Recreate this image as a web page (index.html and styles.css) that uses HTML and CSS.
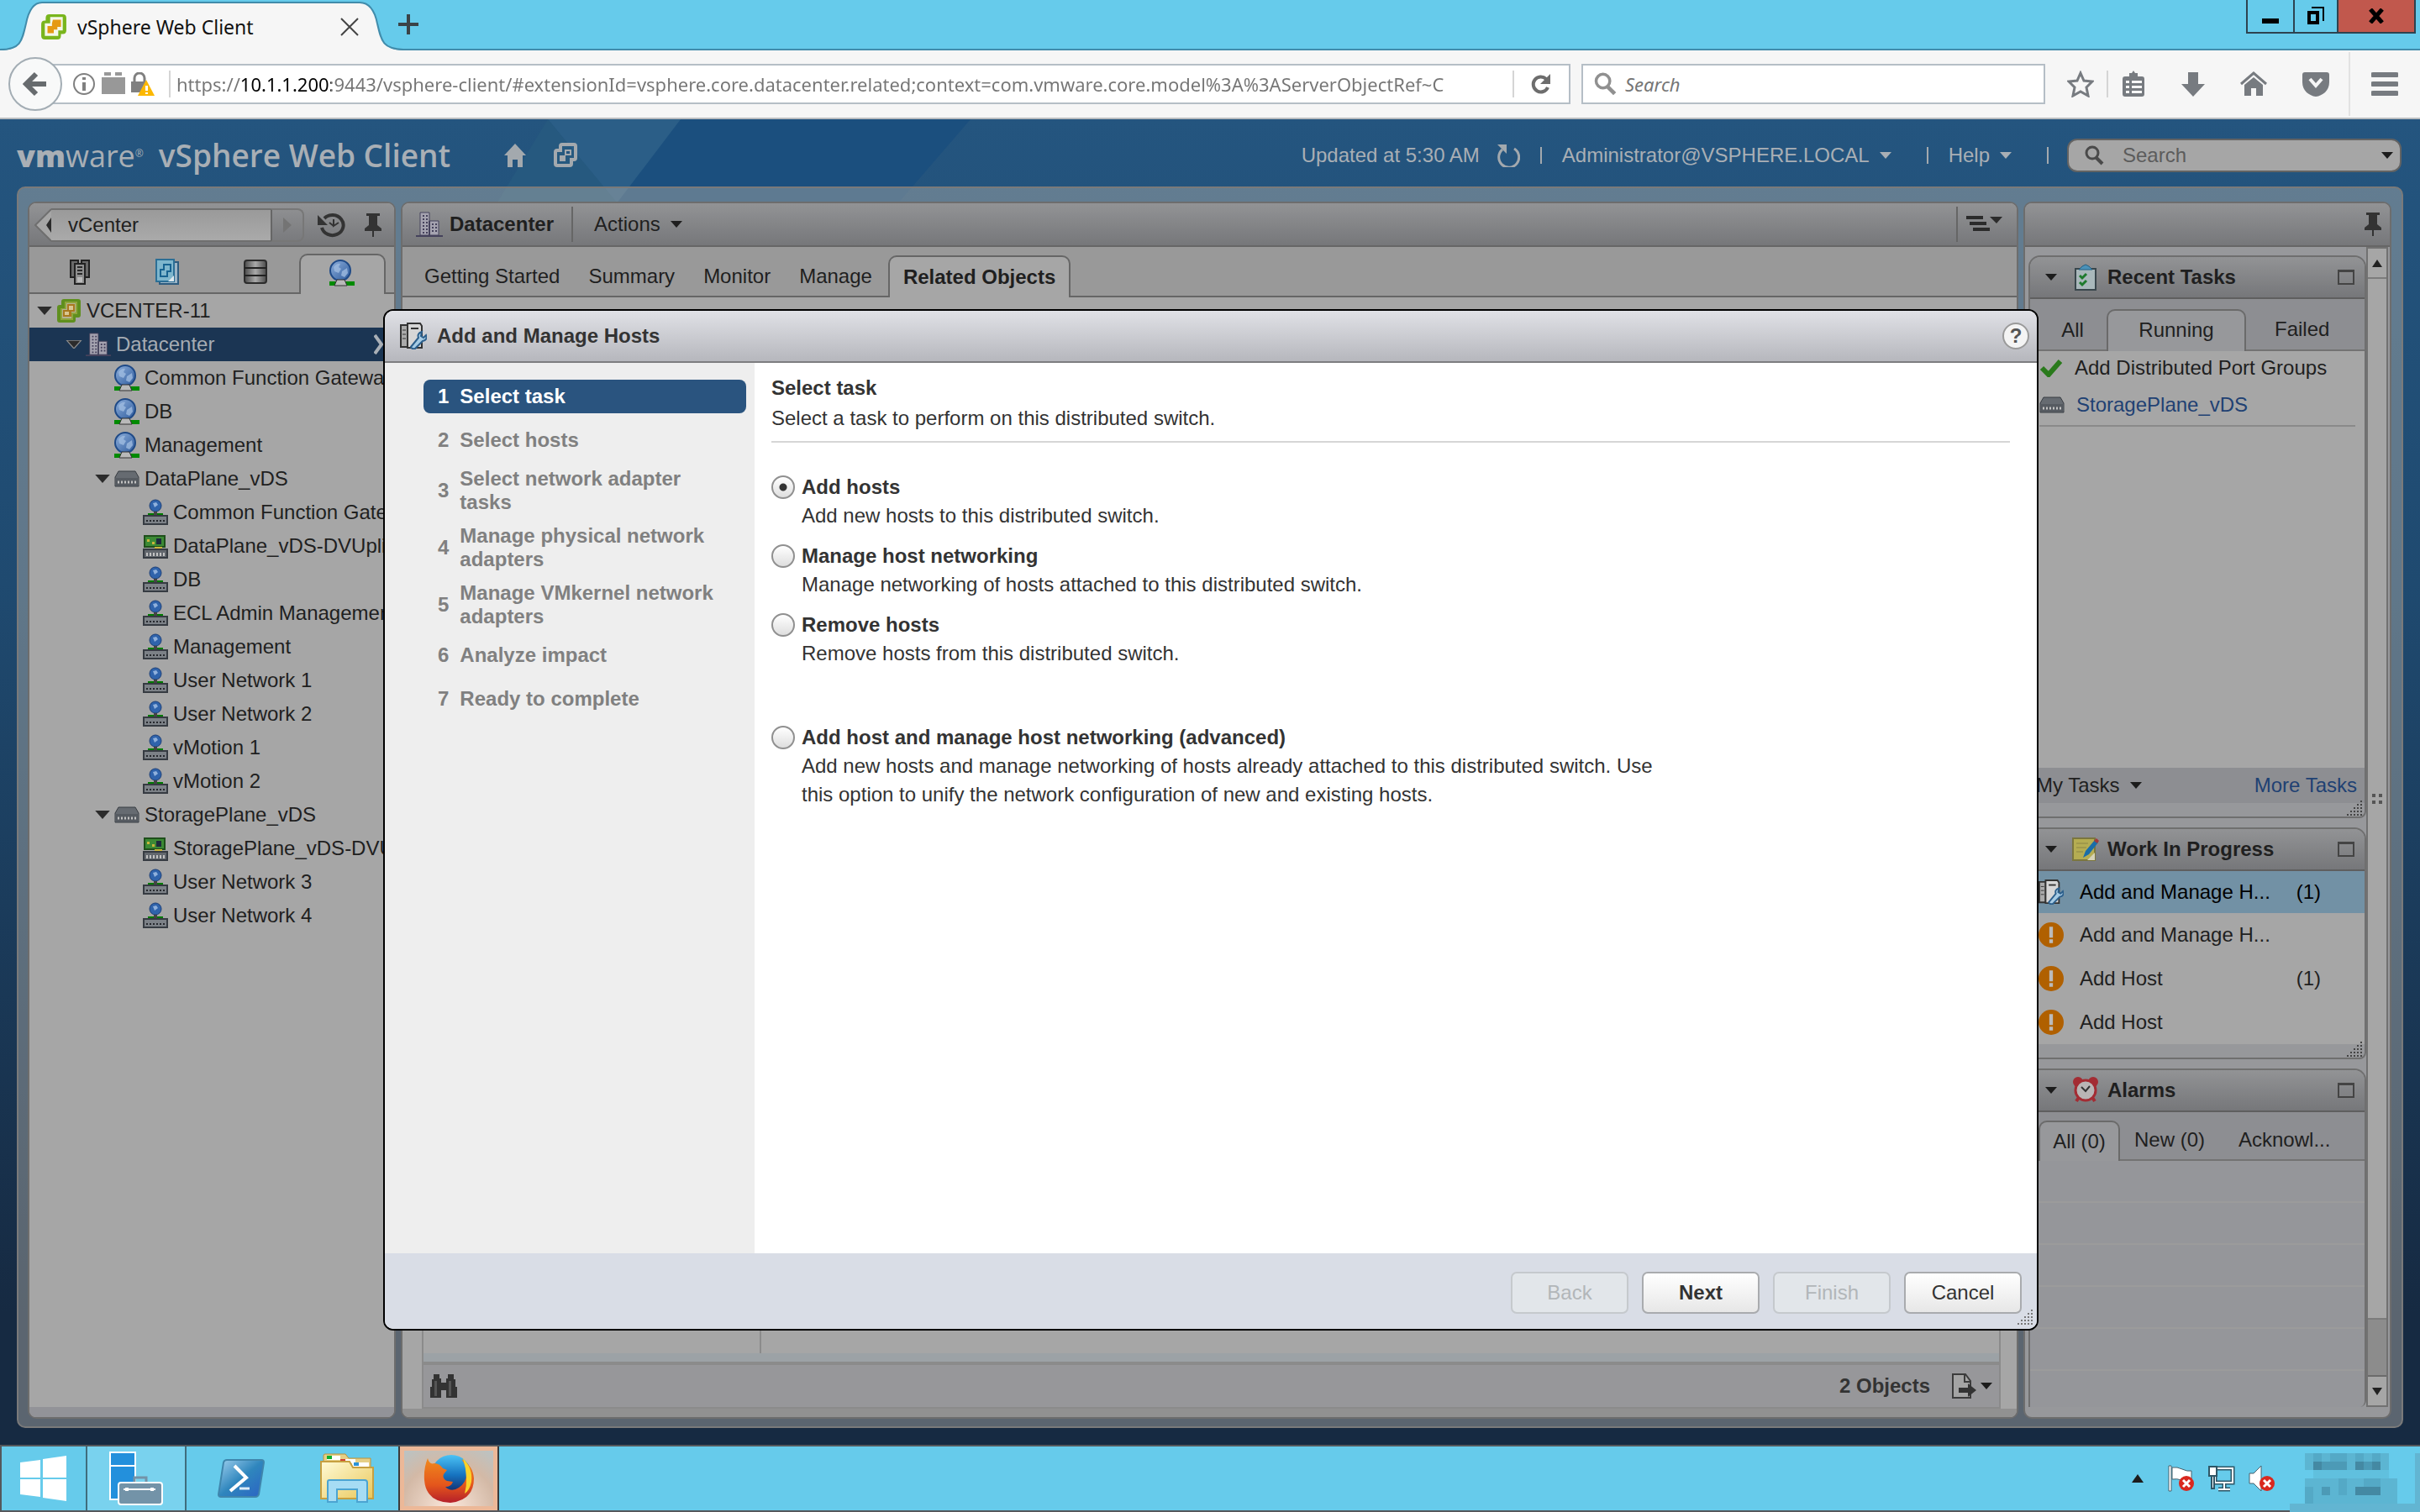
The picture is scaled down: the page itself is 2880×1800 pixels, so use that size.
FILE: index.html
```html
<!DOCTYPE html>
<html lang="en">
<head>
<meta charset="utf-8">
<title>vSphere Web Client</title>
<link rel="stylesheet" href="styles.css">
</head>
<body>
<svg class="defs" aria-hidden="true">
  <defs>
    <linearGradient id="g-globe" x1="0" y1="0" x2="1" y2="1"><stop offset="0" stop-color="#8fb0dc"/><stop offset="1" stop-color="#2d5a9c"/></linearGradient>
    <linearGradient id="g-metal" x1="0" y1="0" x2="1" y2="0"><stop offset="0" stop-color="#4a4a4a"/><stop offset=".5" stop-color="#aaa"/><stop offset="1" stop-color="#4a4a4a"/></linearGradient>
    <linearGradient id="g-ps" x1="0" y1="0" x2="1" y2="1"><stop offset="0" stop-color="#9fd0ee"/><stop offset=".5" stop-color="#2f86bd"/><stop offset="1" stop-color="#2b62c4"/></linearGradient>
    <linearGradient id="g-fold" x1="0" y1="0" x2="1" y2="1"><stop offset="0" stop-color="#fffbd6"/><stop offset="1" stop-color="#e9c75a"/></linearGradient>
    <linearGradient id="g-fox" x1="0" y1="0" x2="0" y2="1"><stop offset="0" stop-color="#f08a1d"/><stop offset=".6" stop-color="#e4561c"/><stop offset="1" stop-color="#b51f2a"/></linearGradient>
    <linearGradient id="g-sea" x1="0" y1="0" x2="0" y2="1"><stop offset="0" stop-color="#4cc3f5"/><stop offset=".5" stop-color="#1673c0"/><stop offset="1" stop-color="#141f5c"/></linearGradient>
  </defs>
  <symbol id="i-vc" viewBox="0 0 30 30">
    <path d="M9 1h17q3 0 3 3v16q0 3-3 3h-3v3q0 3-3 3H4q-3 0-3-3V11q0-3 3-3h2V4q0-3 3-3z" fill="#5f8f1e"/>
    <path d="M10 4h15v15h-5v7H5V12h5z" fill="#8fa53c"/>
    <path d="M12 6h11v11h-5v7H7V13h5z" fill="#b5b294"/>
    <path d="M13 7h9v9h-4v6H8v-8h5z" fill="#a9791d"/><path d="M15 9h5v5h-5zM10 16h5v4h-5z" fill="#d9c691"/>
  </symbol>
  <symbol id="i-vcbright" viewBox="0 0 30 30">
    <path d="M10 1h15q4 0 4 4v14q0 4-4 4h-2v2q0 4-4 4H5q-4 0-4-4V12q0-4 4-4h1V5q0-4 4-4z" fill="#79b51c"/>
    <path d="M11 4h14v15h-5v6H5V11h6z" fill="#f4f7ea"/>
    <path d="M14 7h9v8h-4v3h-4v4H8v-8h5v-3z" fill="#e59a12"/>
  </symbol>
  <symbol id="i-dc" viewBox="0 0 32 30">
    <path d="M5 1h11v10h11v17H5z" fill="#a5a3b0" stroke="#45425c" stroke-width="1"/><path d="M16 11v17M0 29h32" stroke="#45425c" stroke-width="2"/>
    <path d="M8 5h6M8 9h6M8 13h6M8 17h6M8 21h6M8 25h6M19 15h6M19 19h6M19 23h6" stroke="#45425c" stroke-width="2" stroke-dasharray="2 2"/>
  </symbol>
  <symbol id="i-globe" viewBox="0 0 30 32">
    <circle cx="13" cy="13" r="12" fill="url(#g-globe)" stroke="#1f4a87" stroke-width="2"/>
    <path d="M5 9q4-5 8-4l-2 4 3 2-3 5-5-2zM15 14l6-4 1 6-4 5-4-2z" fill="#9fbbe0" opacity=".8"/>
    <path d="M0 26h30v5H0z" fill="#008a00"/><path d="M9 24h9l3 7H6z" fill="#b9b9b9" stroke="#333" stroke-width="1"/>
  </symbol>
  <symbol id="i-switch" viewBox="0 0 30 20">
    <path d="M5 1h20l4 7v11H1V8z" fill="#666b71" stroke="#373c42" stroke-width="1"/><path d="M1 9h28v9H1z" fill="#565b61"/>
    <path d="M4 14h22" stroke="#c2c2c2" stroke-width="3" stroke-dasharray="2 2"/>
  </symbol>
  <symbol id="i-pg" viewBox="0 0 30 32">
    <circle cx="15" cy="8" r="7" fill="#2f63ab" stroke="#1c3f78"/><path d="M12 5l4-1 2 3-4 3z" fill="#8fb0dc"/>
    <path d="M6 18h18" stroke="#007a00" stroke-width="2"/><path d="M13 15h4v4h-4z" fill="#444"/>
    <path d="M1 20h28v10H1z" fill="#7c8187" stroke="#363b42" stroke-width="2"/><path d="M4 26h22" stroke="#26292e" stroke-width="2" stroke-dasharray="2 2"/>
  </symbol>
  <symbol id="i-uplink" viewBox="0 0 30 32">
    <path d="M2 4h24v13H2z" fill="#3c8a35" stroke="#1f4f1b" stroke-width="2"/><path d="M16 7h6v7h-6z" fill="#1e2b3c"/><path d="M5 8h3v3H5zM11 11h3v3h-3zM14 17h9v2h-9z" fill="#c9b53c"/>
    <path d="M1 20h28v10H1z" fill="#62676d" stroke="#363b42" stroke-width="2"/><path d="M4 26h22" stroke="#c2c2c2" stroke-width="4" stroke-dasharray="2 2"/>
  </symbol>
  <symbol id="i-hosts" viewBox="0 0 28 32">
    <path d="M3 2h9v20H3zM16 2h9v20h-9z" fill="#6a6a6a" stroke="#222" stroke-width="2"/><path d="M8 6h12v24H8z" fill="#8f8f8f" stroke="#222" stroke-width="2"/><path d="M11 10h6M11 14h6M11 18h6" stroke="#2b2b2b" stroke-width="2"/><path d="M11 22h6v6h-6z" fill="#bbb"/>
  </symbol>
  <symbol id="i-vms" viewBox="0 0 30 32">
    <path d="M6 4h22v26H6z" fill="#9db5c6" stroke="#2d5c80" stroke-width="2"/><path d="M2 1h21v26H2z" fill="#7eb6cd" stroke="#2c6f96" stroke-width="2"/><path d="M11 7h8v8h-4v6H7v-8h4z" fill="none" stroke="#176391" stroke-width="2"/><path d="M23 20v7h-7z" fill="#dde8ee"/>
  </symbol>
  <symbol id="i-store" viewBox="0 0 28 30">
    <rect x="1" y="1" width="26" height="27" rx="3" fill="url(#g-metal)" stroke="#2c2c2c" stroke-width="2"/><path d="M1 10h26M1 19h26" stroke="#222" stroke-width="2"/>
  </symbol>
  <symbol id="i-pin" viewBox="0 0 24 30"><path d="M4 1h16v3h-3v11l5 4v3H2v-3l5-4V4H4zM11 22h2v7h-2z" fill="currentColor"/></symbol>
  <symbol id="i-hist" viewBox="0 0 34 32"><path d="M8 8a13 12 0 1 1-3 11" fill="none" stroke="currentColor" stroke-width="4"/><path d="M0 4v12h12z" fill="currentColor"/><path d="M19 9v8l6-4M19 17l-5-4" fill="none" stroke="currentColor" stroke-width="2"/></symbol>
  <symbol id="i-wiz" viewBox="0 0 32 32">
    <path d="M1 3h8v26H1z" fill="#aaa" stroke="#333" stroke-width="2"/><path d="M3 9h4M3 14h4M3 19h4" stroke="#333"/>
    <path d="M9 1h15l2 3v26H9z" fill="#d6d6d6" stroke="#333" stroke-width="2"/><path d="M13 7h9" stroke="#333" stroke-width="2"/>
    <path d="M13 29l9-11q-2-5 4-7l-1 5 3 2 3-3q2 6-4 7l-9 9q-4 1-5-2z" fill="#a6cbe4" stroke="#2c5f8c" stroke-width="2"/>
  </symbol>
  <symbol id="i-caret" viewBox="0 0 14 8"><path d="M0 0h14L7 8z" fill="currentColor"/></symbol>
  <symbol id="i-mag" viewBox="0 0 24 24"><circle cx="10" cy="9" r="7" fill="none" stroke="currentColor" stroke-width="3"/><path d="M14 14l8 8" stroke="currentColor" stroke-width="4"/></symbol>
  <symbol id="i-warn" viewBox="0 0 28 28"><circle cx="14" cy="14" r="14" fill="#b06000"/><path d="M12 5h4v12h-4zM12 19h4v4h-4z" fill="#bbb"/></symbol>
  <symbol id="i-grip" viewBox="0 0 20 20"><path d="M17 1h2v2h-2zM13 5h2v2h-2zM17 5h2v2h-2zM9 9h2v2H9zM13 9h2v2h-2zM17 9h2v2h-2zM5 13h2v2H5zM9 13h2v2H9zM13 13h2v2h-2zM17 13h2v2h-2zM1 17h2v2H1zM5 17h2v2H5zM9 17h2v2H9zM13 17h2v2h-2zM17 17h2v2h-2z" fill="currentColor"/></symbol>
</svg>

<header class="titlebar">
  <div class="tab">
    <svg class="tab-shape" viewBox="0 0 480 60" aria-hidden="true"><path d="M0 60C24 60 26 50 31 28Q36 3 50 3H428Q444 3 449 28C454 50 456 59 480 60z" fill="#f6f6f6"/><path d="M0 59C24 59 26 50 31 28Q36 3 50 3H428Q444 3 449 28C454 50 456 58 480 59" fill="none" stroke="#418cab" stroke-width="2"/></svg>
    <svg class="ic32"><use href="#i-vcbright"/></svg>
    <span class="tab-title">vSphere Web Client</span>
    <button class="plain" aria-label="Close tab"><svg width="22" height="22" viewBox="0 0 22 22"><path d="M1 1l20 20M21 1L1 21" stroke="#444" stroke-width="2"/></svg></button>
  </div>
  <button class="plain" aria-label="New tab"><svg width="26" height="26" viewBox="0 0 26 26"><path d="M13 1v24M1 13h24" stroke="#3b4347" stroke-width="4"/></svg></button>
  <div class="winbtns">
    <button class="wb wb-min" aria-label="Minimize"><svg width="20" height="30" viewBox="0 0 20 30"><path d="M0 18h20v6H0z"/></svg></button>
    <button class="wb wb-max" aria-label="Restore"><svg width="22" height="24" viewBox="0 0 22 24"><path d="M6 2h14v16" fill="none" stroke="#000" stroke-width="2"/><path d="M3 8h10v12H3z" fill="none" stroke="#000" stroke-width="4"/></svg></button>
    <button class="wb wb-close" aria-label="Close"><svg width="20" height="18" viewBox="0 0 20 18"><path d="M3 1l14 16M17 1L3 17" stroke="#000" stroke-width="5"/></svg></button>
  </div>
</header>

<nav class="toolbar" aria-label="Browser">
  <button class="back" aria-label="Back"><svg width="30" height="30" viewBox="0 0 30 30"><path d="M16 3L4 15l12 12M5 15h23" fill="none" stroke="#676b6e" stroke-width="6"/></svg></button>
  <div class="urlbox">
    <svg width="28" height="28" viewBox="0 0 28 28"><circle cx="14" cy="14" r="12" fill="none" stroke="#808080" stroke-width="2"/><path d="M12 6h4v3h-4zM12 12h4v10h-4z" fill="#808080"/></svg>
    <svg width="28" height="28" viewBox="0 0 28 28"><path d="M0 6h28v20H0zM3 0h8v4H3zM16 0h8v4h-8z" fill="#989898"/></svg>
    <svg width="28" height="28" viewBox="0 0 28 28"><path d="M4 12V7a6 6 0 0 1 12 0v5" fill="none" stroke="#808080" stroke-width="3"/><path d="M0 11h18v13H0z" fill="#808080"/><path d="M18 9l10 19H8z" fill="#fcb800"/><path d="M17 16h3v6h-3zM17 24h3v2h-3z" fill="#fff"/></svg>
    <span class="vline"></span>
    <input class="url" type="text" aria-label="Address" value="https://10.1.1.200:9443/vsphere-client/#extensionId=vsphere.core.datacenter.related;context=com.vmware.core.model%3A%3AServerObjectRef~C">
    <span class="vline vline-end"></span>
    <button class="plain reload" aria-label="Reload"><svg width="26" height="26" viewBox="0 0 26 26"><path d="M21 17a9 9 0 1 1-2-10" fill="none" stroke="#6d6d6d" stroke-width="4"/><path d="M24 1v12H12z" fill="#6d6d6d"/></svg></button>
  </div>
  <div class="searchbox">
    <svg width="28" height="28" viewBox="0 0 24 24" color="#909090"><use href="#i-mag"/></svg>
    <input class="bsearch" type="text" aria-label="Web search" placeholder="Search">
  </div>
  <div class="tools">
    <svg width="32" height="32" viewBox="0 0 32 32"><path d="M16 3l4 9 10 1-7 7 2 10-9-5-9 5 2-10-7-7 10-1z" fill="none" stroke="#777b80" stroke-width="3"/></svg>
    <span class="vline"></span>
    <svg width="30" height="32" viewBox="0 0 30 32"><path d="M5 7h20q3 0 3 3v18q0 3-3 3H5q-3 0-3-3V10q0-3 3-3zM10 3h3l2-3 2 3h3v5H10z" fill="#777b80"/><path d="M6 12h4v3H6zM13 12h12v3H13zM6 18h4v3H6zM13 18h12v3H13zM6 24h4v3H6zM13 24h12v3H13z" fill="#f6f6f6"/></svg>
    <svg class="t-gap" width="28" height="30" viewBox="0 0 28 30"><path d="M8 1h12v14h8L14 30 0 15h8z" fill="#777b80"/></svg>
    <svg class="t-gap" width="32" height="30" viewBox="0 0 32 30"><path d="M1 15L16 2l15 13" fill="none" stroke="#777b80" stroke-width="3"/><path d="M5 16L16 7l11 9v13h-8v-9h-6v9H5z" fill="#777b80"/></svg>
    <svg class="t-gap" width="32" height="30" viewBox="0 0 32 30"><path d="M3 1h26q3 0 3 3v9c0 10-8 16-16 17C8 29 0 23 0 13V4q0-3 3-3z" fill="#777b80"/><path d="M9 9l7 8 7-8" fill="none" stroke="#f6f6f6" stroke-width="4"/></svg>
    <span class="vline vline-tall"></span>
    <svg width="32" height="28" viewBox="0 0 32 28"><path d="M2 3h28M2 14h28M2 25h28" stroke="#777b80" stroke-width="6" stroke-linecap="round"/></svg>
  </div>
</nav>

<main class="app">
  <svg class="facets" viewBox="0 0 1400 110" aria-hidden="true"><path d="M810 0H1155L1060 110H680z" fill="#1b4f7e"/><path d="M652 0H810L734 100z" fill="#2b5e87"/><path d="M652 0L735 100 725 110H585z" fill="#26597f"/></svg>
  <div class="apphead">
    <div class="logo"><span class="vm">vm</span><span class="ware">ware</span><sup class="reg">®</sup><span class="prod">vSphere Web Client</span></div>
    <svg class="h-home" width="26" height="28" viewBox="0 0 26 28"><path d="M13 0l13 14h-4v14h-6v-9h-6v9H4V14H0z" fill="#a3a9ae"/></svg>
    <svg class="h-vc" width="30" height="30" viewBox="0 0 30 30"><path d="M11 2h14q2 0 2 2v14q0 2-2 2h-3v5q0 2-2 2H5q-2 0-2-2V11q0-2 2-2h4V4q0-2 2-2z" fill="none" stroke="#a3a9ae" stroke-width="4"/><path d="M14 8h8v7h-8zM8 15h7v7H8z" fill="#a3a9ae"/><path d="M16 10h4v3h-4z" fill="#24557f"/></svg>
    <div class="userbar">
      <span>Updated at 5:30 AM</span>
      <button class="plain" aria-label="Refresh"><svg width="28" height="28" viewBox="0 0 28 28"><path d="M21 6a12 12 0 1 1-14 1" fill="none" stroke="#a3a9ae" stroke-width="3"/><path d="M1 1h11v11z" fill="#a3a9ae"/></svg></button>
      <span class="bar"></span>
      <button class="plain menu">Administrator@VSPHERE.LOCAL<svg class="caret"><use href="#i-caret"/></svg></button>
      <span class="bar"></span>
      <button class="plain menu">Help<svg class="caret"><use href="#i-caret"/></svg></button>
      <span class="bar"></span>
    </div>
    <div class="pillsearch">
      <svg width="24" height="24" color="#4a4a4a"><use href="#i-mag"/></svg>
      <input class="vsearch" type="text" aria-label="Search inventory" placeholder="Search">
      <svg class="caret caret-dark"><use href="#i-caret"/></svg>
    </div>
  </div>

  <div class="frame">
    <section class="panel left">
      <div class="phead navhead">
        <svg class="backcap" width="20" height="40" viewBox="0 0 20 40"><path d="M20 1L1 20l19 19" fill="#a6a6a6" stroke="#6f6f6f" stroke-width="2"/><path d="M20 11v18l-6-9z" fill="#2b2b2b"/></svg>
        <button class="crumb">vCenter</button>
        <button class="fwd" aria-label="Forward"><svg width="10" height="18" viewBox="0 0 10 18"><path d="M0 0l10 9-10 9z" fill="#747474"/></svg></button>
        <svg class="nh-hist"><use href="#i-hist"/></svg>
        <svg class="pin"><use href="#i-pin"/></svg>
      </div>
      <div class="icontabs">
        <button class="itab" aria-label="Hosts"><svg class="ic32"><use href="#i-hosts"/></svg></button>
        <button class="itab" aria-label="VMs"><svg class="ic32"><use href="#i-vms"/></svg></button>
        <button class="itab" aria-label="Storage"><svg class="ic28"><use href="#i-store"/></svg></button>
        <button class="itab on" aria-label="Networking"><svg class="ic32"><use href="#i-globe"/></svg></button>
      </div>
      <ul class="tree">
        <li class="l0"><svg class="tw"><use href="#i-caret"/></svg><svg class="ti"><use href="#i-vc"/></svg>VCENTER-11</li>
        <li class="l1 sel"><svg class="tw"><use href="#i-caret"/></svg><svg class="ti"><use href="#i-dc"/></svg><span class="grow">Datacenter</span><svg class="chev" width="12" height="24" viewBox="0 0 12 24"><path d="M1 1l8 11-8 11" fill="none" stroke="#a9afb6" stroke-width="4"/></svg></li>
        <li class="l2"><span class="tw"></span><svg class="ti"><use href="#i-globe"/></svg>Common Function Gateway</li>
        <li class="l2"><span class="tw"></span><svg class="ti"><use href="#i-globe"/></svg>DB</li>
        <li class="l2"><span class="tw"></span><svg class="ti"><use href="#i-globe"/></svg>Management</li>
        <li class="l2"><svg class="tw"><use href="#i-caret"/></svg><svg class="ti ti-sw"><use href="#i-switch"/></svg>DataPlane_vDS</li>
        <li class="l3"><span class="tw"></span><svg class="ti"><use href="#i-pg"/></svg>Common Function Gateway</li>
        <li class="l3"><span class="tw"></span><svg class="ti"><use href="#i-uplink"/></svg>DataPlane_vDS-DVUplinks</li>
        <li class="l3"><span class="tw"></span><svg class="ti"><use href="#i-pg"/></svg>DB</li>
        <li class="l3"><span class="tw"></span><svg class="ti"><use href="#i-pg"/></svg>ECL Admin Management</li>
        <li class="l3"><span class="tw"></span><svg class="ti"><use href="#i-pg"/></svg>Management</li>
        <li class="l3"><span class="tw"></span><svg class="ti"><use href="#i-pg"/></svg>User Network 1</li>
        <li class="l3"><span class="tw"></span><svg class="ti"><use href="#i-pg"/></svg>User Network 2</li>
        <li class="l3"><span class="tw"></span><svg class="ti"><use href="#i-pg"/></svg>vMotion 1</li>
        <li class="l3"><span class="tw"></span><svg class="ti"><use href="#i-pg"/></svg>vMotion 2</li>
        <li class="l2"><svg class="tw"><use href="#i-caret"/></svg><svg class="ti ti-sw"><use href="#i-switch"/></svg>StoragePlane_vDS</li>
        <li class="l3"><span class="tw"></span><svg class="ti"><use href="#i-uplink"/></svg>StoragePlane_vDS-DVUplinks</li>
        <li class="l3"><span class="tw"></span><svg class="ti"><use href="#i-pg"/></svg>User Network 3</li>
        <li class="l3"><span class="tw"></span><svg class="ti"><use href="#i-pg"/></svg>User Network 4</li>
      </ul>
      <div class="pfoot"></div>
    </section>

    <section class="panel mid">
      <div class="phead midhead">
        <svg class="ic32"><use href="#i-dc"/></svg>
        <h1 class="mh-title">Datacenter</h1>
        <span class="sep"></span>
        <button class="plain menu actions">Actions<svg class="caret"><use href="#i-caret"/></svg></button>
        <span class="sep sep-right"></span>
        <button class="plain" aria-label="View options"><svg width="44" height="20" viewBox="0 0 44 20"><path d="M0 2h20M4 9h20M8 16h20" stroke="#2b2b2b" stroke-width="4"/><path d="M28 1h15l-7 8z" fill="#2b2b2b"/></svg></button>
      </div>
      <div class="midtabs">
        <button class="mtab">Getting Started</button><button class="mtab">Summary</button><button class="mtab">Monitor</button><button class="mtab">Manage</button><button class="mtab on">Related Objects</button>
      </div>
      <div class="midbody">
        <div class="grid"><div class="grid-l"></div></div>
        <div class="gridfoot">
          <svg width="32" height="28" viewBox="0 0 32 28"><path d="M4 0h7v5h2v5h6V5h2V0h7v6h2v9h2v13H19v-9h-6v9H0V15h2V6h2z" fill="#333"/><path d="M5 8h3v18H5zM22 8h3v18h-3z" fill="#555"/></svg>
          <span class="count">2 Objects</span>
          <svg width="30" height="30" viewBox="0 0 30 30"><path d="M1 1h15l6 8v20H1z" fill="#a4a4a4" stroke="#3c3c3c" stroke-width="2"/><path d="M15 1v9h7" fill="none" stroke="#3c3c3c" stroke-width="2"/><path d="M8 17h11v-5l10 8-10 8v-5H8z" fill="#333"/></svg>
          <svg class="caret caret-dark"><use href="#i-caret"/></svg>
        </div>
      </div>
      <div class="midfoot"></div>
    </section>

    <section class="panel right">
      <div class="phead righthead"><svg class="pin"><use href="#i-pin"/></svg></div>
      <div class="rbody">
        <div class="portlets">
          <article class="portlet recent">
            <div class="plhead"><svg class="caret caret-dark"><use href="#i-caret"/></svg>
              <svg class="ic32" viewBox="0 0 30 32"><path d="M3 6h24v25H3z" fill="#a9b8bb" stroke="#39464c" stroke-width="2"/><path d="M7 7h16l-4-4-4-2-4 2z" fill="#4b91b8" stroke="#235f82"/><path d="M8 14l3 3 5-5M8 22l3 3 5-5" fill="none" stroke="#1e7a2d" stroke-width="3"/></svg>
              <h2>Recent Tasks</h2><button class="maxbox" aria-label="Maximize"></button></div>
            <div class="ptabs"><button class="ptab w-all">All</button><button class="ptab on w-run">Running</button><button class="ptab w-fail">Failed</button></div>
            <div class="pbody">
              <div class="task"><svg class="t-ic" viewBox="0 0 26 22"><path d="M2 11l8 8L24 3" fill="none" stroke="#2a7a1c" stroke-width="6"/></svg>Add Distributed Port Groups</div>
              <div class="task"><svg class="ti ti-sw"><use href="#i-switch"/></svg><a class="dl" href="#">StoragePlane_vDS</a></div>
              <hr class="trule">
            </div>
            <div class="mytasks"><button class="plain menu">My Tasks<svg class="caret caret-dark"><use href="#i-caret"/></svg></button><a class="dl" href="#">More Tasks</a></div>
            <div class="pstrip"><svg class="grip"><use href="#i-grip"/></svg></div>
          </article>
          <article class="portlet">
            <div class="plhead"><svg class="caret caret-dark"><use href="#i-caret"/></svg>
              <svg class="ic32" viewBox="0 0 32 32"><path d="M1 3h26v26H1z" fill="#b5ad52" stroke="#7b763e" stroke-width="2"/><path d="M5 9h14M5 14h12M5 19h8" stroke="#8b8544" stroke-width="1"/><path d="M13 26l3-8L27 5l4 3-11 14z" fill="#1a6da8"/><path d="M26 6l3-3 3 3-2 3z" fill="#a3383a"/><path d="M27 20v9h-9z" fill="#d5d2b8"/></svg>
              <h2>Work In Progress</h2><button class="maxbox" aria-label="Maximize"></button></div>
            <ul class="wip">
              <li class="wsel"><svg class="w-ic"><use href="#i-wiz"/></svg><span class="wt">Add and Manage H...</span><span>(1)</span></li>
              <li><svg class="w-ic"><use href="#i-warn"/></svg><span class="wt">Add and Manage H...</span></li>
              <li><svg class="w-ic"><use href="#i-warn"/></svg><span class="wt">Add Host</span><span>(1)</span></li>
              <li><svg class="w-ic"><use href="#i-warn"/></svg><span class="wt">Add Host</span></li>
            </ul>
            <div class="pstrip"><svg class="grip"><use href="#i-grip"/></svg></div>
          </article>
          <article class="portlet alarms">
            <div class="plhead"><svg class="caret caret-dark"><use href="#i-caret"/></svg>
              <svg class="ic32" viewBox="0 0 32 32"><circle cx="7" cy="6" r="6" fill="#a32c33"/><circle cx="25" cy="6" r="6" fill="#a32c33"/><path d="M5 29l4-6M27 29l-4-6" stroke="#a32c33" stroke-width="4"/><circle cx="16" cy="16" r="12" fill="#b9b5b5" stroke="#a32c33" stroke-width="3"/><path d="M11 12l5 5 5-6" fill="none" stroke="#333" stroke-width="2"/></svg>
              <h2>Alarms</h2><button class="maxbox" aria-label="Maximize"></button></div>
            <div class="ptabs atabs"><button class="ptab on w-a0">All (0)</button><button class="ptab">New (0)</button><button class="ptab w-ack">Acknowl...</button></div>
            <div class="lines"></div>
          </article>
        </div>
        <div class="scroll">
          <span class="sbtn"><svg width="12" height="9" viewBox="0 0 12 9"><path d="M6 0l6 9H0z" fill="#222"/></svg></span>
          <span class="thumb"><svg width="12" height="12" viewBox="0 0 12 12"><path d="M0 0h4v4H0zM8 0h4v4H8zM0 8h4v4H0zM8 8h4v4H8z" fill="#555"/></svg></span>
          <span class="track"></span>
          <span class="sbtn"><svg width="12" height="9" viewBox="0 0 12 9"><path d="M0 0h12L6 9z" fill="#222"/></svg></span>
        </div>
      </div>
    </section>
  </div>

  <div class="dialog" role="dialog" aria-labelledby="dlg-title">
    <div class="dhead"><svg class="ic32"><use href="#i-wiz"/></svg><h2 id="dlg-title">Add and Manage Hosts</h2><button class="help" aria-label="Help">?</button></div>
    <div class="dmain">
      <ol class="steps">
        <li class="cur"><span class="n">1</span><span>Select task</span></li>
        <li><span class="n">2</span><span>Select hosts</span></li>
        <li><span class="n">3</span><span>Select network adapter tasks</span></li>
        <li><span class="n">4</span><span>Manage physical network adapters</span></li>
        <li><span class="n">5</span><span>Manage VMkernel network adapters</span></li>
        <li><span class="n">6</span><span>Analyze impact</span></li>
        <li><span class="n">7</span><span>Ready to complete</span></li>
      </ol>
      <form class="content">
        <h3>Select task</h3>
        <p class="sub">Select a task to perform on this distributed switch.</p>
        <div class="opts">
          <div class="opt"><input type="radio" name="task" id="o1" checked><label for="o1">Add hosts</label><p>Add new hosts to this distributed switch.</p></div>
          <div class="opt"><input type="radio" name="task" id="o2"><label for="o2">Manage host networking</label><p>Manage networking of hosts attached to this distributed switch.</p></div>
          <div class="opt"><input type="radio" name="task" id="o3"><label for="o3">Remove hosts</label><p>Remove hosts from this distributed switch.</p></div>
          <div class="opt opt-adv"><input type="radio" name="task" id="o4"><label for="o4">Add host and manage host networking (advanced)</label><p>Add new hosts and manage networking of hosts already attached to this distributed switch. Use this option to unify the network configuration of new and existing hosts.</p></div>
        </div>
      </form>
    </div>
    <div class="dfoot">
      <button class="btn" disabled>Back</button><button class="btn next">Next</button><button class="btn" disabled>Finish</button><button class="btn">Cancel</button>
      <svg class="grip dgrip"><use href="#i-grip"/></svg>
    </div>
  </div>
</main>

<footer class="taskbar">
  <button class="tk tk-start" aria-label="Start"><svg width="56" height="54" viewBox="0 0 56 54"><path d="M0 8l24-3v21H0zM27 4l28-4v26H27zM0 28h24v21L0 46zM27 28h28v26l-28-4z" fill="#fff"/></svg></button>
  <button class="tk tk-open" aria-label="Server Manager"><svg width="64" height="64" viewBox="0 0 64 64"><path d="M1 1h30v56H1z" fill="#2390dc" stroke="#fff" stroke-width="2"/><path d="M1 17h30" stroke="#fff" stroke-width="2"/><path d="M30 37v-6h14v6" fill="none" stroke="#7393a8" stroke-width="3"/><rect x="11" y="37" width="52" height="26" rx="3" fill="#7393a8" stroke="#fff" stroke-width="2"/><path d="M17 45h38" stroke="#fff" stroke-width="2"/><path d="M19 43h4v4h-4zM49 43h4v4h-4z" fill="#fff"/></svg></button>
  <button class="tk tk-ps" aria-label="PowerShell"><svg width="56" height="46" viewBox="0 0 56 46"><path d="M11 1h41q3 0 3 3l-6 38q-1 3-4 3H4q-3 0-3-3L7 4q1-3 4-3z" fill="url(#g-ps)" stroke="#3f86ad" stroke-width="2"/><path d="M20 8l14 14L15 38" fill="none" stroke="#fff" stroke-width="4"/><path d="M26 35h12" stroke="#dcecf8" stroke-width="3"/></svg></button>
  <button class="tk tk-ex" aria-label="File Explorer"><svg width="64" height="60" viewBox="0 0 64 60"><path d="M4 3q0-2 2-2h24l4 5h26v18H4z" fill="#e6cf86" stroke="#b9923c"/><path d="M8 3h16v5H8zM24 7h18v5H24zM38 11h20v5H38z" fill="#fff"/><path d="M8 3h6v4H8z" fill="#0db02b"/><path d="M24 7h6v4h-6z" fill="#d2402f"/><path d="M1 10h34l4 7h24v37H1z" fill="url(#g-fold)" stroke="#c7a040" stroke-width="2"/><path d="M40 11h6v4h-6z" fill="#2b93d8"/><path d="M9 34q0-2 2-2h42q3 0 3 3v23H44V43H20v15H9z" fill="#a6dcf4" stroke="#4ba4d2" stroke-width="2"/></svg></button>
  <button class="tk tk-fx" aria-label="Firefox"><svg width="62" height="60" viewBox="0 0 62 60"><circle cx="34" cy="26" r="24" fill="url(#g-sea)"/><path d="M6 6q2 8 8 6 6 0 10 6l5 2-4 5q-2 5 4 8l7 1q-2 6-9 6 7 7 16 1 9-6 9-16 1-9-6-18 14 8 15 23 0 26-28 29Q4 58 2 32 1 18 6 6z" fill="url(#g-fox)"/><path d="M48 6q12 12 10 28-2 10-8 14 5-18-2-42z" fill="#fbd22a"/></svg></button>
  <div class="tray">
    <svg width="14" height="10" viewBox="0 0 14 10"><path d="M7 0l7 10H0z" fill="#1c1c1c"/></svg>
    <svg width="34" height="32" viewBox="0 0 34 32"><path d="M2 1h3v30H2z" fill="#fff" stroke="#47606c"/><path d="M6 3q6-1 12 2 6 3 11 2v12q-6 2-12-1-5-2-11-1z" fill="#fff" stroke="#47606c"/><circle cx="23" cy="22" r="9" fill="#d9281e"/><path d="M19 18l8 8M27 18l-8 8" stroke="#fff" stroke-width="3"/></svg>
    <svg width="34" height="32" viewBox="0 0 34 32"><path d="M9 4h21v17H9zM13 29h14M20 21v8" fill="none" stroke="#2f5666" stroke-width="5"/><path d="M9 4h21v17H9zM13 29h14M20 21v8" fill="none" stroke="#fff" stroke-width="2"/><path d="M2 2h9v11H2zM5 13h3v15H5z" fill="#fff" stroke="#2f5666" stroke-width="2"/></svg>
    <svg width="34" height="32" viewBox="0 0 34 32"><path d="M2 10h5l9-9v30l-9-9H2z" fill="#fff" stroke="#47606c"/><circle cx="23" cy="22" r="9" fill="#d9281e"/><path d="M19 18l8 8M27 18l-8 8" stroke="#fff" stroke-width="3"/></svg>
  </div>
  <svg class="mosaic" width="155" height="70" viewBox="0 0 155 70" aria-hidden="true"><path d="M0 60h155v10H0z" fill="#62b5d2"/><path d="M155 0v70h-6V0z" fill="#62b5d2"/>
    <path d="M18 0h100v20H18zM18 30h110v30H18z" fill="#5cb5d2"/><path d="M28 0h10v20H28zM48 0h20v10H48zM78 0h10v20H78zM98 0h10v20H98zM18 40h10v20H18zM58 30h10v20H58zM88 30h20v10H88z" fill="#54a9c6"/><path d="M28 10h10v10H28zM78 10h10v10H78zM98 10h10v10H98zM78 40h30v10H78z" fill="#4489a3"/><path d="M38 10h30v10H38zM88 10h10v10H88zM38 40h10v10H38z" fill="#4c9ab6"/><path d="M28 20h90v10H28z" fill="#60c0de"/></svg>
</footer>
</body>
</html>
```
FILE: styles.css
```css
* { box-sizing: border-box; }
html, body { margin: 0; height: 100%; }
body {
  display: flex; flex-direction: column; overflow: hidden;
  font: 24px/28px "Liberation Sans", Arial, sans-serif; color: #1f1f1f; background: #172c45;
}
h1, h2, h3, p, ul, ol { margin: 0; padding: 0; font-size: inherit; }
p, h3 { line-height: 34px; }
ul, ol { list-style: none; }
svg { display: block; flex: none; }
.defs { position: absolute; width: 0; height: 0; }
button, input { font: inherit; color: inherit; margin: 0; padding: 0; border: 0; background: none; }
input:focus { outline: none; }
.plain { display: flex; align-items: center; white-space: nowrap; }
.ic32 { width: 32px; height: 32px; }
.ic28 { width: 28px; height: 30px; }
.caret { width: 14px; height: 8px; }
.caret-dark { color: #1c1c1c; }
.vline { width: 2px; height: 32px; background: #d5d5d5; flex: none; }

/* browser window */
.titlebar { flex: none; height: 60px; display: flex; background: #66cbeb; border-bottom: 2px solid #418cab; font-family: "Noto Sans", "Open Sans", sans-serif; color: #111; }
.tab { position: relative; width: 473px; height: 60px; display: flex; align-items: center; padding: 4px 46px 0 48px; gap: 12px; }
.tab > * { position: relative; }
.tab > .tab-shape { position: absolute; left: 0; top: 0; width: 480px; height: 60px; }
.tab-title { flex: 1; font-size: 23px; }
.winbtns { display: flex; height: 40px; margin: 0 5px 0 auto; border: 2px solid #2d4350; border-top: 0; background: #2d4350; gap: 2px; }
.wb { display: flex; align-items: center; justify-content: center; background: #66cbeb; }
.wb-min { width: 54px; } .wb-max { width: 50px; } .wb-close { width: 90px; background: #c1584d; }
.toolbar { flex: none; height: 82px; display: flex; align-items: center; padding: 0 26px 0 10px; background: #f6f6f6; border-bottom: 2px solid #b9bcbf; font-family: "Noto Sans", "Open Sans", sans-serif; font-size: 22px; }
.back { position: relative; z-index: 1; flex: none; width: 64px; height: 64px; border: 2px solid #a3adb4; border-radius: 50%; background: #f8f9f9; display: flex; align-items: center; justify-content: center; }
.urlbox { flex: 1; height: 48px; margin-left: -12px; padding: 0 20px 0 22px; display: flex; align-items: center; gap: 7px; background: #fff; border: 2px solid #b5bec6; }
.urlbox .vline { margin-left: 10px; }
.urlbox .vline-end { margin-left: 36px; }
.url { flex: 1; min-width: 0; height: 40px; color: transparent; caret-color: #000; background: linear-gradient(to right, #757575 77px, #000 77px, #000 184px, #757575 184px); -webkit-background-clip: text; background-clip: text; }
.reload { margin-left: 12px; }
.searchbox { width: 552px; height: 48px; margin-left: 13px; padding: 0 12px; display: flex; align-items: center; gap: 10px; background: #fff; border: 2px solid #b5bec6; }
.bsearch { flex: 1; min-width: 0; font-style: italic; }
.bsearch::placeholder { color: #757575; opacity: 1; }
.tools { display: flex; align-items: center; gap: 15px; margin-left: 26px; }
.t-gap { margin-left: 27px; }
.tools .vline-tall { height: 76px; margin: 0 10px 0 8px; background: #e2e2e2; }

/* client shell */
.app { position: relative; flex: 1; min-height: 0; display: flex; flex-direction: column; padding: 0 20px 20px; background: linear-gradient(#24557f, #1f4a70 35%, #162a42 90%); }
.facets { position: absolute; left: 0; top: 0; width: 1400px; height: 110px; }
.apphead { position: relative; flex: none; height: 80px; display: flex; align-items: center; padding-top: 6px; color: #a9afb5; }
.logo { display: flex; align-items: baseline; font-family: "Open Sans", sans-serif; font-size: 36px; line-height: 44px; white-space: nowrap; }
.vm { font-weight: 800; } .ware { font-weight: 400; }
.reg { font-size: 12px; line-height: 12px; align-self: flex-start; margin: 14px 18px 0 0; }
.prod { font-weight: 600; font-size: 37px; }
.h-home { margin-left: 64px; } .h-vc { margin-left: 32px; }
.userbar { display: flex; align-items: center; margin-left: auto; gap: 20px; white-space: nowrap; }
.userbar .menu { margin-right: 18px; }
.bar { width: 2px; height: 20px; background: #a3a9ae; margin: 0 4px; }
.menu { gap: 12px; }
.pillsearch { display: flex; align-items: center; width: 398px; height: 40px; margin: 0 2px 0 18px; padding: 0 8px 0 18px; gap: 22px; border: 2px solid #636363; border-radius: 12px; background: #a6a6a6; }
.vsearch { flex: 1; min-width: 0; }
.vsearch::placeholder { color: #5c5c5c; opacity: 1; }
.frame { position: relative; flex: 1; min-height: 0; display: flex; gap: 6px; padding: 16px 12px 9px 11px; border: 2px solid #7a7a7a; border-radius: 10px; background: rgba(180, 178, 170, .44); }
.panel { display: flex; flex-direction: column; min-width: 0; overflow: hidden; border: 2px solid #6d6d6d; border-radius: 10px; background: #a6a6a6; }
.left { width: 438px; flex: none; } .mid { flex: 1; } .right { width: 438px; flex: none; background: #97989b; }
.phead { flex: none; height: 52px; display: flex; align-items: center; border-bottom: 2px solid #666; background: linear-gradient(#929395, #76777a); }
.pin { width: 24px; height: 30px; color: #333; }
.navhead { padding: 2px 13px 0 6px; }
.crumb { flex: 1; height: 40px; padding-left: 20px; text-align: left; background: linear-gradient(#9a9a9a, #aaa); border: solid #6f6f6f; border-width: 2px 0; }
.fwd { width: 40px; height: 40px; display: flex; align-items: center; justify-content: center; border: 2px solid #777; border-left-color: #666; border-radius: 0 8px 8px 0; }
.nh-hist { width: 34px; height: 32px; margin: 0 20px 0 16px; color: #333; }
.icontabs { flex: none; height: 56px; display: flex; align-items: flex-end; background: #999; box-shadow: inset 0 -2px #666; padding: 0 10px 0 8px; }
.itab { flex: 1; height: 48px; display: flex; align-items: center; justify-content: center; padding-bottom: 4px; }
.itab.on { flex: none; width: 103px; border: 2px solid #666; border-bottom: 0; border-radius: 10px 10px 0 0; background: #a6a6a6; }
.tree { flex: 1; min-height: 0; overflow: hidden; white-space: nowrap; }
.tree li { height: 40px; display: flex; align-items: center; color: #1f1f1f; }
.tw { flex: none; width: 20px; height: 10px; margin-right: 4px; color: #2b2b2b; }
.ti { width: 30px; height: 32px; margin-right: 6px; }
.ti-sw { height: 20px; }
.l0 { padding-left: 8px; } .l1 { padding-left: 43px; } .l2 { padding-left: 77px; } .l3 { padding-left: 111px; }
.tree .sel { background: #1b3553; color: #a6acb3; }
.sel .tw { stroke: #8b8b8b; stroke-width: 1px; overflow: visible; }
.grow { flex: 1; } .chev { margin-right: 12px; }
.pfoot { height: 12px; background: #929398; }

.midhead { padding: 0 16px 0 16px; }
.mh-title { margin: 0 21px 0 8px; font-weight: 700; }
.sep { width: 2px; height: 42px; background: #666; }
.actions { margin-left: 25px; }
.sep-right { margin: 0 10px 0 auto; }
.midtabs { flex: none; height: 60px; display: flex; align-items: flex-end; padding-left: 9px; background: #999; box-shadow: inset 0 -2px #666; }
.mtab { height: 50px; padding: 0 17px; white-space: nowrap; }
.mtab.on { font-weight: 700; padding: 0 16px; margin-left: 2px; border: 2px solid #666; border-bottom: 0; border-radius: 10px 10px 0 0; background: #a6a6a6; }
.midbody { flex: 1; min-height: 0; display: flex; flex-direction: column; margin: 30px 19px 0 23px; border: 2px solid #8b8b8b; }
.grid { flex: 1; display: flex; border-bottom: 10px solid #9ca2a6; }
.grid-l { width: 402px; border-right: 2px solid #8b8b8b; }
.gridfoot { height: 54px; display: flex; align-items: center; padding: 0 8px 0 8px; border-top: 4px solid #8b8b8b; background: #97979a; color: #333; }
.count { margin: 0 26px 0 auto; font-weight: 700; }
.gridfoot .caret { margin-left: 4px; }
.midfoot { height: 10px; background: #919191; }

.righthead { justify-content: flex-end; padding-right: 8px; }
.rbody { flex: 1; min-height: 0; display: flex; padding: 0 2px 12px 4px; }
.portlets { flex: 1; min-width: 0; display: flex; flex-direction: column; gap: 11px; padding-top: 10px; }
.portlet { display: flex; flex-direction: column; border: 2px solid #6f6f6f; border-radius: 14px 14px 8px 0; overflow: hidden; }
.recent { height: 670px; }
.alarms { flex: 1; border-bottom: 0; }
.plhead { flex: none; height: 50px; display: flex; align-items: center; padding: 0 12px 0 18px; border-bottom: 2px solid #5f5f5f; background: linear-gradient(#929395, #76777a); }
.plhead .ic32 { margin: 0 10px 0 18px; }
.plhead h2 { flex: 1; }
.maxbox { width: 20px; height: 18px; border: 2px solid #444; border-top-width: 3px; }
.ptabs { flex: none; height: 62px; display: flex; align-items: flex-end; background: #8d8e92; box-shadow: inset 0 -2px #737373; }
.ptab { height: 50px; padding: 0 17px 2px; white-space: nowrap; }
.ptab.on { border: 2px solid #6a6a6a; border-bottom: 0; border-radius: 10px 10px 0 0; background: #97989b; }
.w-all { width: 91px; padding: 0 0 0 10px; } .w-run { width: 166px; } .w-fail { padding-left: 34px; }
.pbody { flex: 1; background: #a6a6a6; padding-left: 11px; }
.task { height: 40px; margin-bottom: 4px; display: flex; align-items: center; white-space: nowrap; }
.task .ti { margin-right: 14px; }
.t-ic { width: 28px; height: 22px; margin-right: 14px; }
.dl { color: #1f4173; text-decoration: none; }
.trule { margin: 0 11px 0 0; border: 0; border-top: 2px solid #8a8a8a; }
.mytasks { flex: none; height: 42px; display: flex; align-items: center; justify-content: space-between; padding: 0 9px 0 7px; background: #8d8e92; }
.pstrip { flex: none; height: 16px; display: flex; justify-content: flex-end; align-items: flex-end; padding-right: 2px; }
.grip { width: 20px; height: 20px; color: #444; }
.wip li { height: 52px; display: flex; align-items: center; padding: 0 52px 0 10px; background: #a6a6a6; }
.wip .wsel { height: 50px; background: #7291a5; color: #000; }
.w-ic { width: 30px; height: 30px; margin-right: 19px; }
.wt { flex: 1; }
.atabs { height: 58px; padding-left: 10px; }
.atabs .ptab { height: 48px; }
.ptabs .w-a0 { width: 97px; padding: 0; }
.w-ack { margin-left: 6px; }
.lines { flex: 1; background: repeating-linear-gradient(#95969a 0 48px, #9b9b9b 48px 50px); }
.scroll { width: 26px; display: flex; flex-direction: column; border: 2px solid #717171; background: #a6a6a6; }
.sbtn { height: 34px; display: flex; align-items: center; justify-content: center; }
.thumb { flex: 1; display: flex; align-items: center; justify-content: center; border: solid #7c7c7c; border-width: 2px 0; }
.track { height: 68px; background: #8c8c8c; border-bottom: 2px solid #6b6b6b; }

/* wizard */
.dialog { position: absolute; inset: 226px 454px 136px 456px; display: flex; flex-direction: column; overflow: hidden; border: 2px solid #000; border-radius: 12px; background: #fff; color: #333; }
.dhead { flex: none; height: 62px; display: flex; align-items: center; gap: 12px; padding: 0 9px 0 18px; border-bottom: 2px solid #7d7d80; background: linear-gradient(#e0e1e6, #b6b7bd); }
.dhead h2 { flex: 1; }
.help { width: 32px; height: 32px; border: 2px solid #9a9a9a; border-radius: 50%; background: #f4f4f4; color: #555; font-weight: 700; line-height: 28px; }
.dmain { flex: 1; min-height: 0; display: flex; }
.steps { flex: none; width: 440px; padding: 20px 10px 0 46px; display: flex; flex-direction: column; gap: 12px; background: #eee; color: #808080; font-weight: 700; }
.steps li { min-height: 40px; padding: 0 30px 0 17px; display: flex; align-items: center; gap: 13px; }
.steps .cur { background: #2a547f; color: #fff; border-radius: 8px; }
.content { flex: 1; padding: 13px 32px 0 20px; }
.sub { height: 46px; margin-top: 2px; border-bottom: 2px solid #d6d6d6; }
.opts { display: flex; flex-direction: column; gap: 14px; padding-top: 36px; }
.opt { display: grid; grid-template-columns: 36px 1050px; align-items: center; }
.opt label { font-weight: 700; line-height: 34px; }
.opt p { grid-column: 2; }
.opt-adv { margin-top: 52px; }
.opt input { appearance: none; width: 28px; height: 28px; border: 2px solid #909090; border-radius: 50%; background: linear-gradient(#fff, #dedede); }
.opt input:checked { background: radial-gradient(circle, #333 0 4px, transparent 5px), linear-gradient(#fff, #dedede); }
.dfoot { position: relative; flex: none; height: 90px; display: flex; align-items: center; justify-content: flex-end; gap: 16px; padding: 4px 18px 0 0; background: #d9dde6; }
.btn { width: 140px; height: 50px; border: 2px solid #a9abae; border-radius: 7px; background: linear-gradient(#fff, #e7e7e7); }
.next { font-weight: 700; }
.btn:disabled { border-color: #c5c9cd; background: #e2e6ea; color: #b2b6b9; }
.dgrip { position: absolute; right: 4px; bottom: 4px; color: #777; }

/* taskbar */
.taskbar { flex: none; height: 80px; display: flex; background: #66cbeb; border: 2px solid #55585c; border-right: 0; }
.tk { display: flex; align-items: center; justify-content: center; }
.tk-start { width: 100px; }
.tk-open { width: 120px; background: #79d2ee; border: solid #3f6d7d; border-width: 0 2px; }
.tk-ps { width: 130px; } .tk-ex { width: 122px; }
.tk-fx { width: 120px; border: 2px solid #3b3b3b; border-width: 0 2px; background: radial-gradient(circle at 50% 100%, #fce8dc, #d3b9a6 60%, #b4c6cc); box-shadow: inset 0 0 0 5px #ecb898; }
.tray { display: flex; align-items: center; gap: 14px; margin: 0 16px 0 auto; }
.tray svg:first-child { margin-right: 14px; }
.mosaic { margin-top: 8px; }
```
